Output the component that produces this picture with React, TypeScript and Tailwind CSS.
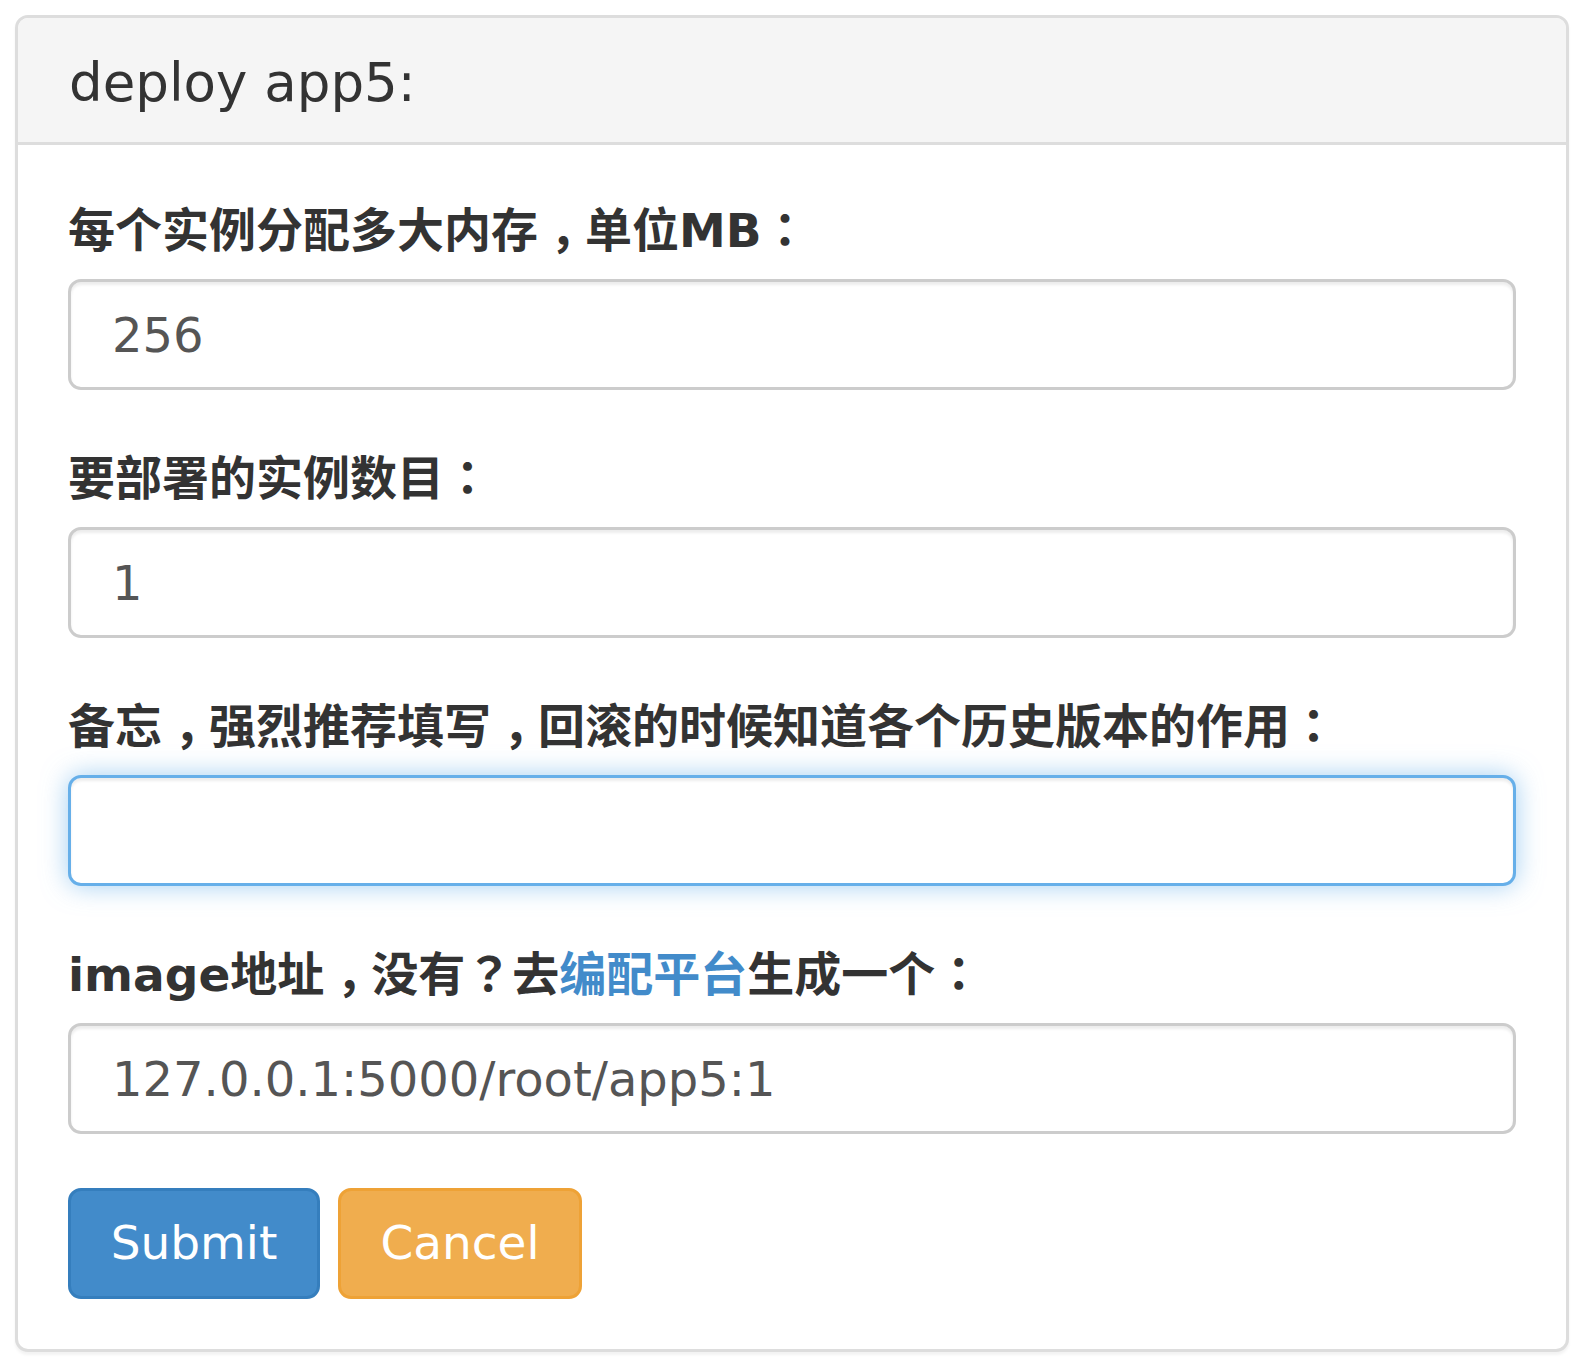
const font = "font-['DejaVu_Sans','Noto_Sans_CJK_SC',sans-serif]";

// full-width colon / question mark sit centred in the reference, as in the TC face
function P({ children }: { children: React.ReactNode }) {
  return <span className="leading-none font-['Noto_Sans_CJK_TC',sans-serif]">{children}</span>;
}

// comma sits low, but nearer the middle of its em box
function Comma() {
  return <span className="pl-[12px] tracking-[-12px]">，</span>;
}

function Field({
  label,
  value,
  focused,
}: {
  label: React.ReactNode;
  value?: string;
  focused?: boolean;
}) {
  return (
    <div className="mb-[57px]">
      <label className="block h-[64px] mb-[16px] text-[47px] leading-[64px] font-semibold text-[#333] whitespace-nowrap">
        {label}
      </label>
      <input
        type="text"
        defaultValue={value}
        readOnly
        className={
          focused
            ? "block w-full h-[111px] px-[41px] rounded-[13px] border-[3px] border-[#66afe9] bg-white text-[48px] text-[#555] outline-none shadow-[inset_0_3px_3px_rgba(0,0,0,0.075),0_0_26px_rgba(102,175,233,0.6)]"
            : "block w-full h-[111px] px-[41px] rounded-[13px] border-[3px] border-[#ccc] bg-white text-[48px] text-[#555] outline-none shadow-[inset_0_3px_3px_rgba(0,0,0,0.075)]"
        }
      />
    </div>
  );
}

export default function App() {
  return (
    <div className={`min-h-screen bg-white pt-[15px] px-[15px] ${font}`}>
      <div className="rounded-[13px] border-[3px] border-[#ddd] bg-white shadow-[0_3px_3px_rgba(0,0,0,0.05)] overflow-hidden">
        {/* header */}
        <div className="h-[127px] border-b-[3px] border-[#ddd] bg-[#f5f5f5] pt-[36px] px-[51px]">
          <h3 className="text-[53px] leading-[58px] text-[#333]">deploy app5:</h3>
        </div>

        {/* body */}
        <div className="px-[50px] pt-[54px] pb-[50px]">
          <Field
            label={
              <>
                每个实例分配多大内存<Comma />单位MB<P>：</P>
              </>
            }
            value="256"
          />
          <Field
            label={
              <>
                要部署的实例数目<P>：</P>
              </>
            }
            value="1"
          />
          <Field
            label={
              <>
                备忘<Comma />强烈推荐填写<Comma />回滚的时候知道各个历史版本的作用<P>：</P>
              </>
            }
            focused
          />
          <Field
            label={
              <>
                image地址<Comma />没有<P>？</P>去
                <a href="#" className="text-[#428bca] no-underline">
                  编配平台
                </a>
                生成一个<P>：</P>
              </>
            }
            value="127.0.0.1:5000/root/app5:1"
          />

          <div className="-mt-[3px] flex gap-[18px]">
            <button className="h-[111px] w-[252px] rounded-[13px] border-[3px] border-[#357ebd] bg-[#428bca] text-[47px] text-white">
              Submit
            </button>
            <button className="h-[111px] w-[244px] rounded-[13px] border-[3px] border-[#eea236] bg-[#f0ad4e] text-[47px] text-white">
              Cancel
            </button>
          </div>
        </div>
      </div>
    </div>
  );
}
